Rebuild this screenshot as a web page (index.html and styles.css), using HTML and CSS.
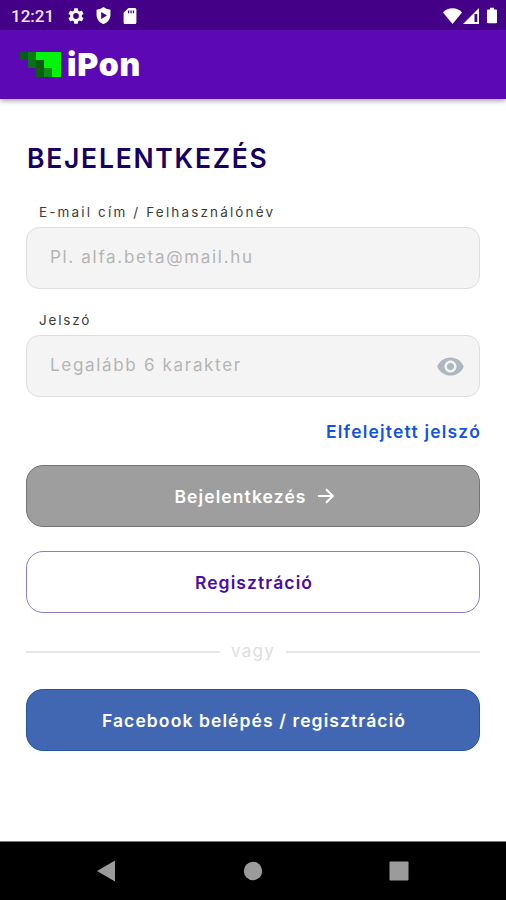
FILE: index.html
```html
<!DOCTYPE html>
<html lang="hu">
<head>
<meta charset="UTF-8">
<meta name="viewport" content="width=device-width, initial-scale=1.0">
<title>iPon - Bejelentkezés</title>
<link rel="stylesheet" href="styles.css">
</head>
<body>

<div class="screen">
    <div class="statusbar">
        <span class="time">12:21</span>
        <div class="status-left">
            <svg class="gear" viewBox="2 2 20 20"><path fill-rule="evenodd" d="M19.14 12.94c.04-.3.06-.61.06-.94 0-.32-.02-.64-.07-.94l2.03-1.58a.49.49 0 0 0 .12-.61l-1.92-3.32a.49.49 0 0 0-.59-.22l-2.39.96c-.5-.38-1.03-.7-1.62-.94l-.36-2.54a.48.48 0 0 0-.48-.41h-3.84a.48.48 0 0 0-.47.41l-.36 2.54c-.59.24-1.13.57-1.62.94l-2.39-.96a.48.48 0 0 0-.59.22L2.74 8.87a.48.48 0 0 0 .12.61l2.03 1.58c-.05.3-.09.63-.09.94s.02.64.07.94l-2.03 1.58a.49.49 0 0 0-.12.61l1.92 3.32c.12.22.37.29.59.22l2.39-.96c.5.38 1.03.7 1.62.94l.36 2.54c.05.24.24.41.48.41h3.84c.24 0 .44-.17.47-.41l.36-2.54c.59-.24 1.13-.56 1.62-.94l2.39.96c.22.08.47 0 .59-.22l1.92-3.32a.48.48 0 0 0-.12-.61zM12 15.6a3.6 3.6 0 1 1 0-7.2 3.6 3.6 0 0 1 0 7.2z"/></svg>
            <svg class="shield" viewBox="3 1 18 22"><path fill-rule="evenodd" d="M12 1Q9 4 3 4.500V11c0 5.550 3.840 10.740 9 12 5.160-1.260 9-6.450 9-12V4.500Q15 4 12 1zM9 7.500 16.500 12 9 16.500z"/></svg>
            <svg class="sdcard" viewBox="4 2 16 20"><path fill-rule="evenodd" d="M18 2h-8L4 8v12c0 1.1.9 2 2 2h12c1.1 0 2-.9 2-2V4c0-1.1-.9-2-2-2zM9.5 5v3.500h1.6V5zm3 0v3.500h1.6V5zm3 0v3.500h1.6V5z"/></svg>
        </div>
        <div class="status-right">
            <svg class="wifi" viewBox="0 0 19 16"><path d="M9.500 16 0 4.400C2.500 1.600 6 .2 9.500.2s7 1.400 9.500 4.200z"/></svg>
            <svg class="signal" viewBox="0 0 16 16"><path fill-rule="evenodd" d="M16 0v16H0zM11.500 6v8h2.800V6z"/></svg>
            <svg class="battery" viewBox="0 0 11 17"><path d="M3.300 0h4.400v1.800H10q1 0 1 1V16q0 1-1 1H1q-1 0-1-1V2.800q0-1 1-1h2.300z"/></svg>
        </div>
    </div>

    <div class="header">
        <svg class="logo" viewBox="0 0 41 25" shape-rendering="crispEdges">
            <rect x="16" width="25" height="25" fill="#02f40c"/>
            <rect width="8" height="8" fill="#065a1c"/>
            <rect x="8" width="8" height="8" fill="#087b12"/>
            <rect x="8" y="8" width="8" height="8" fill="#06701a"/>
            <rect x="16" y="8" width="8" height="8" fill="#075c10"/>
            <rect x="16" y="16" width="8" height="9" fill="#06600f"/>
            <rect x="24" y="16" width="8" height="9" fill="#078f12"/>
        </svg>
        <span class="brand">iPon</span>
    </div>

    <form class="login">
        <h1 class="title">BEJELENTKEZÉS</h1>

        <label class="label label-email" for="email">E-mail cím / Felhasználónév</label>
        <div class="field">
            <input class="input" id="email" type="text" placeholder="Pl. alfa.beta@mail.hu">
        </div>

        <label class="label label-password" for="password">Jelszó</label>
        <div class="field">
            <input class="input" id="password" type="password" placeholder="Legalább 6 karakter">
            <svg class="eye" viewBox="0 0 24 24"><path d="M12 4.500C7 4.500 2.730 7.610 1 12c1.730 4.390 6 7.500 11 7.500s9.270-3.110 11-7.500c-1.730-4.390-6-7.500-11-7.500zM12 17c-2.760 0-5-2.240-5-5s2.240-5 5-5 5 2.240 5 5-2.240 5-5 5zm0-8c-1.660 0-3 1.340-3 3s1.340 3 3 3 3-1.340 3-3-1.340-3-3-3z"/></svg>
        </div>

        <a class="forgot" href="#">Elfelejtett jelszó</a>

        <button class="button button-login" type="button">
            <span>Bejelentkezés</span>
            <svg class="arrow" viewBox="0 0 16 16"><path d="M0 8h14.500M8 1.200 14.800 8 8 14.800"/></svg>
        </button>
        <button class="button button-register" type="button"><span>Regisztráció</span></button>

        <div class="divider"><span class="divider-text">vagy</span></div>

        <button class="button button-facebook" type="button"><span>Facebook belépés / regisztráció</span></button>
    </form>

    <div class="navbar">
        <svg viewBox="0 0 22 22"><path d="M19 .5v21L1 11z"/></svg>
        <svg viewBox="0 0 22 22"><circle cx="11" cy="11" r="9.200"/></svg>
        <svg viewBox="0 0 22 22"><rect x="1.500" y="1.500" width="19" height="19" rx="1"/></svg>
    </div>
</div>

</body>
</html>
```
FILE: styles.css
```css
* {
    box-sizing: border-box;
}

body {
    margin: 0;
    font-family: Inter, "Open Sans", sans-serif;
    background-color: #fff;
}

svg {
    display: block;
    flex: none;
}

.screen {
    display: flex;
    flex-direction: column;
    height: 900px;
}

/* Android status bar */
.statusbar {
    display: flex;
    align-items: center;
    height: 30px;
    padding: 1px 9px 0 11px;
    background-color: #440087;
    color: #eee6f5;
    fill: #fff;
}

.time {
    width: 57px;
    font-family: Roboto, sans-serif;
    font-size: 17px;
    font-weight: 500;
}

.status-left {
    display: flex;
    align-items: center;
    gap: 12px;
}

.gear {
    width: 16px;
    height: 16px;
}

.shield {
    width: 15px;
    height: 17px;
}

.sdcard {
    width: 14px;
    height: 16px;
}

.status-right {
    display: flex;
    align-items: center;
    margin-left: auto;
}

.wifi {
    width: 19px;
    height: 16px;
}

.signal {
    width: 16px;
    height: 16px;
    margin-left: 1px;
}

.battery {
    width: 10px;
    height: 17px;
    margin-left: 8px;
}

/* App header */
.header {
    display: flex;
    align-items: center;
    height: 69px;
    padding-left: 20px;
    background-color: #5c09b5;
    box-shadow: 0 2px 5px rgba(0, 0, 0, 0.35);
}

.logo {
    width: 41px;
    height: 25px;
}

.brand {
    margin-left: 6px;
    font-size: 32px;
    line-height: 40px;
    font-weight: 900;
    letter-spacing: 0.8px;
    color: #fff;
}

/* Login form */
.login {
    display: flex;
    flex-direction: column;
    flex: 1;
    padding: 41px 26px 0 26px;
}

.title {
    margin: 0 0 27px 1px;
    font-size: 26.500px;
    line-height: 36px;
    font-weight: 600;
    letter-spacing: 1.750px;
    color: #160060;
    white-space: nowrap;
}

.label {
    height: 18px;
    margin: 0 0 6px 13px;
    font-size: 13.500px;
    line-height: 18px;
    letter-spacing: 2.150px;
    color: #3c3c3c;
}

.label-password {
    margin-top: 22px;
    letter-spacing: 1.800px;
}

.field {
    display: flex;
    align-items: center;
    height: 62px;
    padding: 0 14px 0 23px;
    border: 1px solid #dedede;
    border-radius: 13px;
    background-color: #f4f4f4;
}

.input {
    flex: 1;
    min-width: 0;
    padding: 0 0 2px;
    border: 0;
    outline: 0;
    background: none;
    font-family: inherit;
    font-size: 17px;
    letter-spacing: 1.680px;
}

.input::placeholder {
    color: #b5b5b5;
}

.eye {
    width: 29px;
    height: 29px;
    fill: #aeb6c1;
}

.forgot {
    align-self: flex-end;
    margin: 22px -1px 21px 0;
    font-size: 17.500px;
    line-height: 25px;
    font-weight: 600;
    letter-spacing: 1.200px;
    color: #1453dd;
    text-decoration: none;
}

.button {
    display: flex;
    justify-content: center;
    align-items: center;
    flex: none;
    height: 62px;
    padding: 0 0 0 2px;
    border: 1px solid;
    border-radius: 17px;
    font-family: inherit;
    font-size: 17.500px;
    font-weight: 600;
    letter-spacing: 1.100px;
    color: #fff;
}

.button-login {
    border-color: #747474;
    background-color: #9e9e9e;
}

.arrow {
    width: 16px;
    height: 16px;
    margin-left: 11px;
    fill: none;
    stroke: #fff;
    stroke-width: 2;
}

.button-register {
    margin-top: 24px;
    border-color: #917bc9;
    background-color: #fff;
    color: #4b0ca5;
}

.divider {
    display: flex;
    align-items: center;
    gap: 11px;
    height: 24px;
    margin: 27px 0 25px;
}

.divider::before,
.divider::after {
    content: "";
    flex: 1;
    height: 2px;
    background-color: #e6e6e6;
}

.divider-text {
    font-size: 17px;
    line-height: 22px;
    margin-top: -2px;
    letter-spacing: 1.200px;
    color: #dedede;
}

.button-facebook {
    border-color: #2454a4;
    background-color: #4267b2;
}

/* Android navigation */
.navbar {
    display: flex;
    justify-content: space-between;
    height: 59px;
    padding: 18px 96px 0;
    border-top: 1px solid #777;
    background-color: #000;
    fill: #9b9b9b;
}

.navbar svg {
    width: 22px;
    height: 22px;
}
```
